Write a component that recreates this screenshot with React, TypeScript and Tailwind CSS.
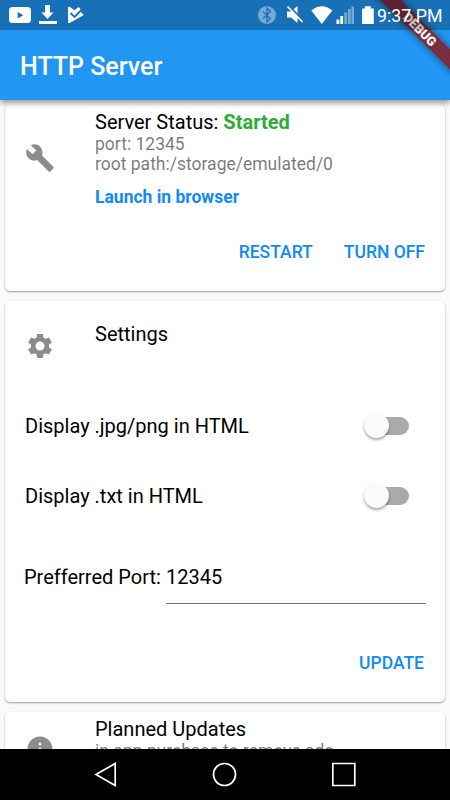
import type { ReactNode } from "react";
import { MdBuild, MdInfo, MdSettings } from "react-icons/md";

function StatusBar() {
  return (
    <div className="relative z-20 flex h-[30px] items-center bg-black/25 text-white">
      <svg className="h-[30px] w-[90px]" viewBox="0 0 90 30" fill="currentColor">
        <path
          fillRule="evenodd"
          d="M12.5 7h15q3.5 0 3.5 3.5v9q0 3.5-3.5 3.5h-15q-3.5 0-3.500-3.500v-9q0-3.500 3.500-3.500zM17.700 12v6.500l5.600-3.200z"
        />
        <path d="M45 5h5v7.500h3.500L47.500 19l-6-6.500H45zM39 21h18v3H39z" />
        <path d="M68 8q0-2 1.800-1l4.700 3.200L78.500 7l2 2 1 4 1.800 1.200q.6.600-.3 1.200L70 22.800q-2 1-2-1z" />
        <path d="M70.500 13l4 4L82 9.500" fill="none" stroke="#1971b6" strokeWidth="1.800" />
      </svg>

      <svg className="ml-[165px] h-[30px] w-[120px]" viewBox="255 0 120 30" fill="currentColor">
        <circle cx="267" cy="15" r="9" opacity="0.4" />
        <path
          d="M263 11.500l7.500 7-3.500 3.500V8l3.500 3.500-7.500 7"
          fill="none"
          stroke="#1971b6"
          strokeWidth="1.300"
        />
        <path d="M287 11.500h4l6.500-5.500v17l-6.500-5.500h-4z" />
        <path d="M288.500 5.500l16 16.500" stroke="#1971b6" strokeWidth="1.800" />
        <path d="M287.500 6.500l15 15.500" stroke="currentColor" strokeWidth="1.700" />
        <path d="M311.300 10.500q10.500-8.500 21 0L321.800 24z" />
        <path d="M336.500 19.500h2.800V24h-2.800zM340.300 16h2.800v8h-2.800z" />
        <path
          d="M344.300 12.500h2.800V24h-2.800zM348 9h2.800v15H348zM351.500 6.500h2.500V24h-2.500z"
          opacity="0.4"
        />
        <path d="M364.800 6.300h6V8.500h3V24h-11.700V8.500h2.700z" />
      </svg>
      <span className="mt-[2px] ml-[2px] text-[17.8px] leading-[28px] whitespace-nowrap">
        9:37 PM
      </span>
    </div>
  );
}

function DebugBanner() {
  return (
    <div className="absolute top-0 right-0 z-10 h-[100px] w-[100px] overflow-hidden">
      <div className="absolute top-[22px] left-[10px] h-[15px] w-[120px] rotate-45 bg-[#8e1616]/81 text-center text-[12.75px] leading-[15px] font-black text-white shadow-[0_0_7px_rgba(0,0,0,0.5)]">
        DEBUG
      </div>
    </div>
  );
}

function Card({ className, children }: { className: string; children: ReactNode }) {
  return (
    <section
      className={`mx-[5px] shrink-0 rounded-[5px] bg-white shadow-[0_1px_2px_rgba(0,0,0,0.38)] ${className}`}
    >
      {children}
    </section>
  );
}

function FlatButton({ children }: { children: ReactNode }) {
  return (
    <button className="text-[17.5px] leading-5 font-medium text-[#108af7]">{children}</button>
  );
}

function SwitchRow({ label }: { label: string }) {
  return (
    <div className="flex h-[70px] items-center justify-between pr-9 pl-5">
      <span className="text-xl leading-6">{label}</span>
      <span className="relative h-[18px] w-[41px] rounded-full bg-[#aaaaaa]">
        <span className="absolute -top-1 -left-1 h-[25px] w-[25px] rounded-full bg-[#fafafa] shadow-[0_2px_3px_rgba(0,0,0,0.35)]" />
      </span>
    </div>
  );
}

function NavBar() {
  return (
    <nav className="flex h-[51px] shrink-0 bg-black">
      <svg className="h-[51px] w-full" viewBox="0 749 450 51" fill="none" stroke="white" strokeWidth="1.700">
        <path d="M96 774.500l19.200-11v22z" />
        <circle cx="224.500" cy="774.500" r="11" />
        <path d="M332.800 763.500h22v22h-22z" />
      </svg>
    </nav>
  );
}

export default function App() {
  return (
    <main className="relative flex h-[800px] w-[450px] flex-col overflow-hidden bg-[#fafafa] font-[Roboto,sans-serif] text-black">
      <header className="z-[5] h-[100px] shrink-0 bg-[#2196f3] shadow-[0_3px_6px_rgba(0,0,0,0.4)]">
        <StatusBar />
        <h1 className="pt-[22px] pl-5 text-[25px] leading-[30px] font-medium text-white">
          HTTP Server
        </h1>
        <DebugBanner />
      </header>

      <div className="flex min-h-0 flex-1 flex-col gap-[10px] overflow-hidden pt-[5px]">
        {/* Server status */}
        <Card className="h-[186px]">
          <div className="flex pt-[5px] pl-5">
            <MdBuild className="mt-[33px] h-[30px] w-[30px] text-[#8c8c8c]" />
            <div className="pl-10">
              <h2 className="text-xl leading-6">
                Server Status: <b className="font-bold text-[#2fab38]">Started</b>
              </h2>
              <p className="text-[17.5px] leading-5 text-black/54">port: 12345</p>
              <p className="text-[17.5px] leading-5 text-black/54">root path:/storage/emulated/0</p>
              <a className="mt-[13px] block text-[17.5px] leading-5 font-bold text-[#108af7]">
                Launch in browser
              </a>
            </div>
          </div>
          <div className="mt-[35px] flex justify-end gap-[31px] pr-5">
            <FlatButton>RESTART</FlatButton>
            <FlatButton>TURN OFF</FlatButton>
          </div>
        </Card>

        {/* Settings */}
        <Card className="h-[401px]">
          <div className="flex h-[90px] pt-[21px] pl-5">
            <MdSettings className="mt-[9px] h-[30px] w-[30px] text-[#8c8c8c]" />
            <h2 className="pl-10 text-xl leading-6">Settings</h2>
          </div>
          <SwitchRow label="Display .jpg/png in HTML" />
          <SwitchRow label="Display .txt in HTML" />
          <div className="mt-[34px] flex pr-[19px] pl-[19px]">
            <span className="w-[142px] shrink-0 text-xl leading-6">Prefferred Port:</span>
            <span className="h-[39px] flex-1 border-b border-[#707070] text-xl leading-6">
              12345
            </span>
          </div>
          <div className="mt-[49px] flex justify-end pr-[21px]">
            <FlatButton>UPDATE</FlatButton>
          </div>
        </Card>

        {/* Planned updates */}
        <Card className="h-[120px]">
          <div className="flex pt-[5px] pl-5">
            <MdInfo className="mt-[17px] h-[30px] w-[30px] text-[#8c8c8c]" />
            <div className="pl-10">
              <h2 className="text-xl leading-6">Planned Updates</h2>
              <p className="text-[17.5px] leading-5 text-black/54">in app purchase to remove ads</p>
            </div>
          </div>
        </Card>
      </div>

      <NavBar />
    </main>
  );
}
